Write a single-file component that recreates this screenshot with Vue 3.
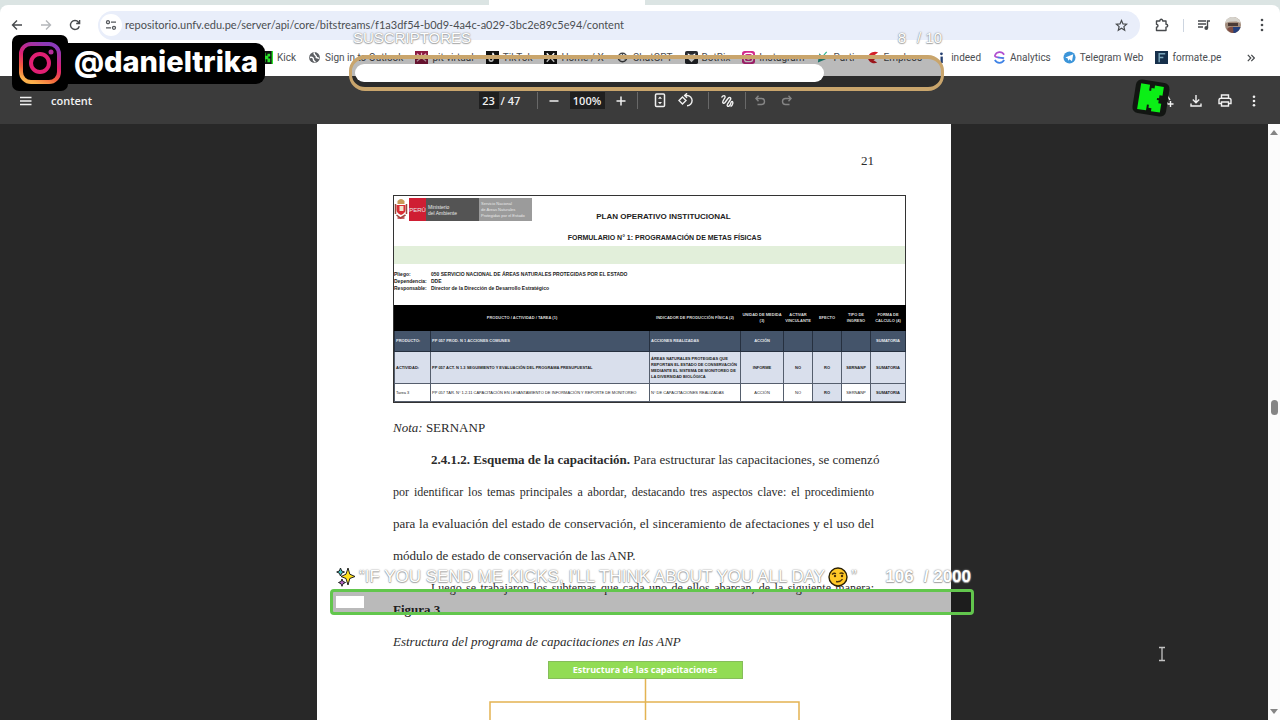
<script setup>
const bookmarks = [
  { label: 'Kick', icon: 'kick' },
  { label: 'Sign in to Outlook', icon: 'globe' },
  { label: 'pit virtual', icon: 'pit' },
  { label: 'TikTok', icon: 'tiktok' },
  { label: 'Home / X', icon: 'x' },
  { label: 'ChatGPT', icon: 'gpt' },
  { label: 'BotRix', icon: 'botrix' },
  { label: 'Instagram', icon: 'insta' },
  { label: 'Parti', icon: 'parti' },
  { label: 'Empleos', icon: 'empleos' },
  { label: 'indeed', icon: 'indeed' },
  { label: 'Analytics', icon: 'analytics' },
  { label: 'Telegram Web', icon: 'telegram' },
  { label: 'formate.pe', icon: 'formate' }
]
const subs = { now: 8, goal: 10, shown: 80 }
const kicks = { now: 106, goal: 2000, shown: 4.5 }
</script>

<template>
  <div class="screen">
    <div class="tabstrip"><div class="tab"></div></div>

    <header class="browser">
      <div class="nav">
        <button class="ib" aria-label="Atrás"><svg width="12" height="12" viewBox="0 0 12 12"><path d="M11 6H2M6 1.5 1.5 6 6 10.500" fill="none" stroke="#474a4d" stroke-width="1.400" /></svg></button>
        <button class="ib" aria-label="Adelante"><svg width="12" height="12" viewBox="0 0 12 12"><path d="M1 6h9M6 1.500 10.500 6 6 10.500" fill="none" stroke="#b4b7ba" stroke-width="1.400" /></svg></button>
        <button class="ib" aria-label="Recargar"><svg width="12" height="12" viewBox="0 0 12 12"><path d="M10.300 7.200A4.500 4.500 0 1 1 9.500 3.200L10.500 4.300M10.600 1v3.500H7.200" fill="none" stroke="#474a4d" stroke-width="1.400" /></svg></button>
      </div>
      <div class="address">
        <button class="site" aria-label="Información del sitio"><svg width="12" height="12" viewBox="0 0 12 12" fill="none" stroke="#55585c" stroke-width="1.300"><circle cx="3" cy="3.200" r="1.500" /><path d="M6 3.200h5M1 8.800h5" /><circle cx="9" cy="8.800" r="1.500" /></svg></button>
        <input class="url" aria-label="Dirección" value="repositorio.unfv.edu.pe/server/api/core/bitstreams/f1a3df54-b0d9-4a4c-a029-3bc2e89c5e94/content" />
        <button class="ib" aria-label="Favorito"><svg width="13" height="13" viewBox="0 0 13 13"><path d="m6.500 1.500 1.500 3.400 3.600.3-2.700 2.400.8 3.600-3.200-1.900-3.200 1.900.8-3.600-2.700-2.400 3.600-.3z" fill="none" stroke="#474a4d" stroke-width="1.200" /></svg></button>
      </div>
      <div class="tools">
        <button class="ib" aria-label="Extensiones"><svg width="14" height="14" viewBox="0 0 14 14"><path d="M1.500 3h3.300c0-2.300 2.900-2.300 2.900 0H11v3.300c2.300 0 2.300 2.800 0 2.800V12.500H1.500V9.300c2-.3 2-2.800 0-3z" fill="none" stroke="#474a4d" stroke-width="1.400" stroke-linejoin="round" /></svg></button>
        <span class="bar"></span>
        <button class="ib" aria-label="Multimedia"><svg width="14" height="12" viewBox="0 0 14 12"><path d="M1 2h8M1 5h8M1 8h5M10.500 9V2h2.500" fill="none" stroke="#474a4d" stroke-width="1.400" /><circle cx="9.300" cy="9" r="1.900" fill="#474a4d" /></svg></button>
        <button class="ib" aria-label="Perfil"><svg width="18" height="18" viewBox="0 0 18 18"><circle cx="9" cy="9" r="8" fill="#a28c7c" /><path d="M1.500 7C2 2 6 .8 9.500 1c4 .3 6.500 3 7 6l-4-1.500-7 .3z" fill="#d6d3cc" /><path d="M4 7h10v3H4z" fill="#4a3a35" /><path d="M3 13c3-3 8-3 11 1-2 4-8 4-11-1z" fill="#7d4c42" /><path d="M9 11h7.500c-1 3.500-4 6-7 6z" fill="#24407c" /></svg></button>
        <button class="ib" aria-label="Menú"><svg width="4" height="14" viewBox="0 0 4 14" fill="#474a4d"><circle cx="2" cy="2" r="1.300" /><circle cx="2" cy="7" r="1.300" /><circle cx="2" cy="12" r="1.300" /></svg></button>
      </div>
    </header>

    <nav class="bookmarks">
      <a v-for="b in bookmarks" :key="b.label" class="bm" href="#">
        <svg class="bi" viewBox="0 0 14 14">
          <template v-if="b.icon === 'kick'"><path d="M0 0h14v14H0z" fill="#111" /><path d="M3 2h3v3h2V3h3v3H9v2h2v4H8V9H6v3H3z" fill="#2be52b" /><path d="M12.500 0H14v14h-1.500z" fill="#2be52b" /></template>
          <template v-else-if="b.icon === 'globe'"><circle cx="7" cy="7" r="5.800" fill="#5c5f63" /><path d="M2 7c3-1 4 1 4 3l2 2M7 1.500C5 4 10 5 9 7l3 1" fill="none" stroke="#fff" stroke-width="1.500" /></template>
          <template v-else-if="b.icon === 'pit'"><path d="M0 0h14v14H0z" fill="#8b1940" /><path d="m2 3 10 8M12 3 2 11M7 2v4" stroke="#e6b9c8" stroke-width="1.300" /></template>
          <template v-else-if="b.icon === 'tiktok'"><path d="M0 0h14v14H0z" fill="#111" /><path d="M7.500 2v7a2 2 0 1 1-2-2M7.500 3q1 2.500 3.500 2.500" fill="none" stroke="#fff" stroke-width="1.600" /></template>
          <template v-else-if="b.icon === 'x'"><path d="M0 0h14v14H0z" fill="#111" /><path d="m3 2.500 8 9M11 2.500l-8 9" stroke="#fff" stroke-width="1.500" /></template>
          <template v-else-if="b.icon === 'gpt'"><circle cx="7" cy="7" r="4.500" fill="none" stroke="#3f4245" stroke-width="1.600" /><path d="m4 5 6 4M10 5 4 9M7 3v4" stroke="#3f4245" /></template>
          <template v-else-if="b.icon === 'botrix'"><rect width="14" height="14" rx="2" fill="#26282d" /><path d="M3 2.500 5.500 4h3L11 2.500V8l-4 4-4-4z" fill="#fff" /></template>
          <template v-else-if="b.icon === 'insta'"><rect width="14" height="14" rx="3" fill="#d32a8c" /><rect x="2.500" y="2.500" width="9" height="9" rx="2.500" fill="none" stroke="#fff" stroke-width="1.300" /><circle cx="7" cy="7" r="2" fill="#f7a53a" stroke="#fff" /></template>
          <template v-else-if="b.icon === 'parti'"><path d="m2 12.500 1.500-10 7 6.500z" fill="#2b9b8d" /><path d="m8 5 3.500-4M9.500 7H13" stroke="#31b58d" stroke-width="1.300" /></template>
          <template v-else-if="b.icon === 'empleos'"><path d="M12 1.500C7-1 1 3 1 7s5 8 10 5.500L7 10l4-3-5-1z" fill="#d41f27" /></template>
          <template v-else-if="b.icon === 'indeed'"><circle cx="8" cy="3" r="1.500" fill="#243e6f" /><path d="M7 6h2.500v7H7z" fill="#243e6f" /></template>
          <template v-else-if="b.icon === 'analytics'"><path d="M12 4A5.500 5.500 0 0 0 2 5c0 3 8 1 9 3.500" fill="none" stroke="#b04fd0" stroke-width="1.800" /><path d="M2 9.500A5.500 5.500 0 0 0 12 9.500M5 7l7 .5" fill="none" stroke="#3f83e6" stroke-width="1.800" /></template>
          <template v-else-if="b.icon === 'telegram'"><circle cx="7" cy="7" r="6.500" fill="#3c95d9" /><path d="m2.500 7 8.500-3.500L9.700 11 7 9l-1.500 1.500L5.200 8z" fill="#fff" /></template>
          <template v-else><path d="M0 0h14v14H0z" fill="#16304b" /><path d="M4.500 12V3H11M4.500 7H9" fill="none" stroke="#7ba6bb" stroke-width="1.500" /></template>
        </svg>
        <span>{{ b.label }}</span>
      </a>
      <button class="ib more" aria-label="Más marcadores"><svg width="8" height="8" viewBox="0 0 8 8"><path d="m.8.800 3 3.200-3 3.200M4.300.8l3 3.200-3 3.200" fill="none" stroke="#474a4d" stroke-width="1.200" /></svg></button>
    </nav>

    <section class="pdfbar">
      <div class="left">
        <button class="ib" aria-label="Índice"><svg width="12" height="10" viewBox="0 0 12 10"><path d="M0 1.500h11.500M0 5h11.500M0 8.500h11.500" stroke="#f1f1f1" stroke-width="1.500" /></svg></button>
        <span class="title">content</span>
      </div>
      <div class="mid">
        <input class="field pageno" aria-label="Página" value="23" />
        <span class="total">/ 47</span>
        <div class="grp zoomgrp">
          <button class="pb" aria-label="Alejar"><svg width="10" height="10" viewBox="0 0 10 10"><path d="M.5 5h9" stroke="#f1f1f1" stroke-width="1.500" /></svg></button>
          <input class="field zoom" aria-label="Zoom" value="100%" />
          <button class="pb" aria-label="Acercar"><svg width="10" height="10" viewBox="0 0 10 10"><path d="M.5 5h9M5 .5v9" stroke="#f1f1f1" stroke-width="1.500" /></svg></button>
        </div>
        <div class="grp fit">
          <button class="pb" aria-label="Ajustar"><svg width="12" height="15" viewBox="0 0 12 15"><rect x="1.500" y="1" width="9" height="12.500" rx="1" fill="none" stroke="#f1f1f1" stroke-width="1.500" /><path d="M4 5.700h4L6 3.500zM4 9h4l-2 2.200z" fill="#f1f1f1" /></svg></button>
          <button class="pb" aria-label="Girar"><svg width="15" height="15" viewBox="0 0 15 15"><path d="m4.500 4 3.500 3.500L4.500 11 1 7.500zM6.500 2.500H9a5 5 0 0 1 0 10.200M9 .3 6.600 2.500 9 4.800" fill="none" stroke="#f1f1f1" stroke-width="1.400" /></svg></button>
        </div>
        <div class="grp draw">
          <button class="pb" aria-label="Dibujar"><svg width="14" height="14" viewBox="0 0 14 14"><path d="M1.500 3.500C3 1 5.500 1 5 3.500L3 7c-1 2 .8 3 2 1.500l3-4c1.500-2 3.500-.5 2.500 1L7.500 10c-1 2 .5 3.300 2 1.500 2-2 1-4 2.500-4s1 4-1.500 5" fill="none" stroke="#f1f1f1" stroke-width="1.400" /></svg></button>
        </div>
        <div class="grp hist">
          <button class="pb" aria-label="Deshacer"><svg width="11" height="11" viewBox="0 0 11 11"><path d="M3.500.8.9 3.500l2.600 2.700M1 3.500h5.500a3 3 0 0 1 0 6H2.500" fill="none" stroke="#858585" stroke-width="1.400" /></svg></button>
          <button class="pb" aria-label="Rehacer"><svg width="11" height="11" viewBox="0 0 11 11"><path d="m7.500.8 2.600 2.700-2.600 2.700M10 3.500H4.500a3 3 0 0 0 0 6h4" fill="none" stroke="#858585" stroke-width="1.400" /></svg></button>
        </div>
      </div>
      <div class="right">
        <button class="ib" aria-label="Resaltar"><svg width="14" height="14" viewBox="0 0 14 14"><path d="M7 1 3 9h5M7 1l3 5M10.500 7v6M7.500 10h6M1 12.500h5" fill="none" stroke="#f1f1f1" stroke-width="1.400" /></svg></button>
        <button class="ib" aria-label="Descargar"><svg width="12" height="12" viewBox="0 0 12 12"><path d="M6 0v7.500M2.800 4.500 6 7.700l3.200-3.200M1 8.500V11h10V8.500" fill="none" stroke="#f1f1f1" stroke-width="1.400" /></svg></button>
        <button class="ib" aria-label="Imprimir"><svg width="14" height="13" viewBox="0 0 14 13"><path d="M3.500 4V1h7v3M3.500 9.500H1V6q0-1.800 2-1.800h8q2 0 2 1.800v3.500h-2.500M3.500 8h7v4h-7z" fill="none" stroke="#f1f1f1" stroke-width="1.400" /></svg></button>
        <button class="ib" aria-label="Más acciones"><svg width="4" height="12" viewBox="0 0 4 12" fill="#f1f1f1"><circle cx="2" cy="1.700" r="1.300" /><circle cx="2" cy="6" r="1.300" /><circle cx="2" cy="10.300" r="1.300" /></svg></button>
      </div>
    </section>

    <main class="viewer">
      <div class="canvas">
        <article class="page">
          <div class="folio">21</div>
          <figure class="form">
            <div class="logos">
              <svg class="crest" viewBox="0 0 13 22"><path d="M3 3q3.500-4 7 0v3H3z" fill="#c99a57" /><path d="M2 7h9v5q0 3-4.500 5Q2 15 2 12z" fill="#d92f35" /><path d="M5 8h4v5H5z" fill="#efe5cf" /><path d="M1 6v10M12 6v10M2 17l4 3 5-3" fill="none" stroke="#9b4b3d" stroke-width="1.500" /><path d="M3 20h7" stroke="#b63438" stroke-width="1.500" /></svg>
              <span class="peru">PERÚ</span>
              <span class="min">Ministerio<br />del Ambiente</span>
              <span class="serv">Servicio Nacional<br />de Áreas Naturales<br />Protegidas por el Estado</span>
            </div>
            <h2>PLAN OPERATIVO INSTITUCIONAL</h2>
            <h3>FORMULARIO N° 1: PROGRAMACIÓN DE METAS FÍSICAS</h3>
            <div class="band"></div>
            <dl class="meta">
              <dt>Pliego:</dt><dd>050 SERVICIO NACIONAL DE ÁREAS NATURALES PROTEGIDAS POR EL ESTADO</dd>
              <dt>Dependencia:</dt><dd>DDE</dd>
              <dt>Responsable:</dt><dd>Director de la Dirección de Desarrollo Estratégico</dd>
            </dl>
            <table>
              <colgroup><col class="c1" /><col class="c2" /><col class="c3" /><col class="c4" /><col class="c5" /><col class="c5" /><col class="c5" /><col class="c6" /></colgroup>
              <thead>
                <tr><th colspan="2">PRODUCTO / ACTIVIDAD / TAREA (1)</th><th>INDICADOR DE PRODUCCIÓN FÍSICA (2)</th><th>UNIDAD DE MEDIDA<br />(3)</th><th>ACTIVAR<br />VINCULANTE</th><th>EFECTO</th><th>TIPO DE<br />INGRESO</th><th>FORMA DE<br />CALCULO (4)</th></tr>
              </thead>
              <tbody>
                <tr class="prod"><td>PRODUCTO:</td><td>PP 057 PROD. N 1 ACCIONES COMUNES</td><td>ACCIONES REALIZADAS</td><td>ACCIÓN</td><td></td><td></td><td></td><td>SUMATORIA</td></tr>
                <tr class="act"><td>ACTIVIDAD:</td><td>PP 057 ACT. N 1.3 SEGUIMIENTO Y EVALUACIÓN DEL PROGRAMA PRESUPUESTAL</td><td>ÁREAS NATURALES PROTEGIDAS QUE<br />REPORTAN EL ESTADO DE CONSERVACIÓN<br />MEDIANTE EL SISTEMA DE MONITOREO DE<br />LA DIVERSIDAD BIOLÓGICA</td><td>INFORME</td><td>NO</td><td>RO</td><td>SERNANP</td><td>SUMATORIA</td></tr>
                <tr class="task"><td>Tarea 3</td><td>PP 057 TAR. N° 1.2.11 CAPACITACIÓN EN LEVANTAMIENTO DE INFORMACIÓN Y REPORTE DE MONITOREO</td><td>N° DE CAPACITACIONES REALIZADAS</td><td>ACCIÓN</td><td>NO</td><td class="hl">RO</td><td>SERNANP</td><td class="hl">SUMATORIA</td></tr>
              </tbody>
            </table>
          </figure>
          <p class="plain"><em>Nota:</em> SERNANP</p>
          <p class="body">
            <span class="line first"><b>2.4.1.2. Esquema de la capacitación.</b> Para estructurar las capacitaciones, se comenzó</span>
            <span class="line small">por identificar los temas principales a abordar, destacando tres aspectos clave: el procedimiento</span>
            <span class="line">para la evaluación del estado de conservación, el sinceramiento de afectaciones y el uso del</span>
            <span class="line last">módulo de estado de conservación de las ANP.</span>
          </p>
          <p class="body"><span class="line first small">Luego se trabajaron los subtemas que cada uno de ellos abarcan, de la siguiente manera:</span></p>
          <p class="fig"><b>Figura 3</b></p>
          <p class="plain"><em>Estructura del programa de capacitaciones en las ANP</em></p>
          <div class="chart">
            <div class="node">Estructura de las capacitaciones</div>
            <svg width="312" height="60" viewBox="0 0 312 60"><path d="M156.500 0v60M1 60V23h309v37" fill="none" stroke="#e3b352" stroke-width="1.500" /></svg>
          </div>
        </article>
      </div>
      <div class="scroll">
        <svg width="8" height="5" viewBox="0 0 8 5"><path d="M0 5h8L4 0z" fill="#858585" /></svg>
        <span class="thumb"></span>
        <svg width="8" height="5" viewBox="0 0 8 5"><path d="M0 0h8L4 5z" fill="#858585" /></svg>
      </div>
    </main>

    <div class="handle">
      <div class="igbox">
        <svg width="42" height="42" viewBox="0 0 42 42">
          <defs><linearGradient id="ig" x1=".7" y1="0" x2=".3" y2="1"><stop offset="0" stop-color="#8a3ab9" /><stop offset=".45" stop-color="#e01f73" /><stop offset=".75" stop-color="#f2603c" /><stop offset="1" stop-color="#fbb04b" /></linearGradient></defs>
          <rect x="2" y="2" width="38" height="38" rx="10" fill="none" stroke="url(#ig)" stroke-width="4" />
          <circle cx="21" cy="21" r="9" fill="none" stroke="#e01f73" stroke-width="4" /><circle cx="32" cy="10" r="2.500" fill="#b62c9c" />
        </svg>
      </div>
      <span class="name">@danieltrika</span>
    </div>

    <div class="goal subs">
      <div class="row"><span>SUSCRIPTORES</span><span class="count"><span>{{ subs.now }}</span><span>/ {{ subs.goal }}</span></span></div>
      <div class="track" role="progressbar" aria-label="Suscriptores" :aria-valuenow="subs.now" :aria-valuemax="subs.goal"><div class="fill" :style="{ width: subs.shown + '%' }"></div></div>
    </div>

    <div class="goal kicks">
      <div class="row">
        <span class="msg">
          <svg width="20" height="20" viewBox="0 0 20 20" stroke="#222" stroke-width="1"><path d="m12 1 1.800 6.200L19 9.500l-5.200 2L12 18l-2-6.500-5-2 5-2.300z" fill="#ffe21f" /><path d="m4.500 1 1.200 3L8.500 5 5.700 6.200 4.500 9 3.300 6.200.7 5l2.600-1z" fill="#43c5c8" /><path d="m6 12 1 2.500 2.500 1L7 16.700 6 19.300l-1-2.600-2.500-1.200L5 14.500z" fill="#b765c9" /></svg>
          <span>“IF YOU SEND ME KICKS, I'LL THINK ABOUT YOU ALL DAY</span>
          <svg width="20" height="20" viewBox="0 0 20 20"><circle cx="10" cy="10" r="9" fill="#ffc928" stroke="#2a2005" stroke-width="1.400" /><path d="M4 7.500q2-2 4-.8M11.500 6.500q2.500-1.300 4 .7M8 14.500q4 1 6.500-2.300" fill="none" stroke="#4a3108" stroke-width="1.300" /><circle cx="7" cy="9" r="1.200" fill="#4a3108" /><circle cx="14" cy="9" r="1.200" fill="#4a3108" /></svg>
          <span>”</span>
        </span>
        <span class="count"><span>{{ kicks.now }}</span><span>/ {{ kicks.goal }}</span></span>
      </div>
      <div class="track" role="progressbar" aria-label="Kicks" :aria-valuenow="kicks.now" :aria-valuemax="kicks.goal"><div class="fill" :style="{ width: kicks.shown + '%' }"></div></div>
    </div>

    <svg class="kbadge" width="40" height="40" viewBox="0 0 40 40"><g transform="rotate(9 20 20)"><rect x="3" y="3" width="34" height="34" rx="6" fill="#121512" /><path d="M8 7h9v6h2v-3h3V7h9v9h-3v3h-2v2h2v3h3v9h-9v-3h-3v-3h-2v6H8z" fill="#0bef16" /></g></svg>
    <svg class="cursor" width="8" height="16" viewBox="0 0 8 16"><path d="M1 1.500h6M1 14.500h6M4 1.500v13" stroke="#c4c4c4" stroke-width="1.300" /></svg>
  </div>
</template>

<style>
body { background: #282828; }
</style>

<style scoped>
.screen { position: relative; display: flex; flex-direction: column; height: 100vh; overflow: hidden; background: #dbe4e3; font-family: "Open Sans", "Noto Sans", sans-serif; }
.screen * { box-sizing: border-box; }
button { padding: 0; border: 0; background: none; display: flex; align-items: center; justify-content: center; }
input { border: 0; padding: 0; min-width: 0; font-family: inherit; }
svg { flex: none; display: block; }
.ib { width: 20px; height: 20px; }
.tabstrip { height: 5px; flex: none; display: flex; justify-content: center; }
.tab { width: 156px; margin-right: 146px; background: #fff; }
.browser { flex: none; height: 40px; background: #fff; border-radius: 8px 8px 0 0; display: flex; align-items: center; padding: 0 8px 0 7px; gap: 12px; }
.nav { display: flex; gap: 9px; margin-right: 1px; }
.address { flex: 1; height: 29px; border-radius: 15px; background: #e9eefa; display: flex; align-items: center; padding: 0 9px 0 2px; }
.site { width: 22px; height: 22px; border-radius: 50%; background: #fff; }
.url { flex: 1; margin-left: 3px; background: none; font-size: 11px; line-height: 20px; color: #4b4e52; font-family: Lato, sans-serif; }
.tools { display: flex; align-items: center; gap: 9px; }
.bar { width: 1px; height: 13px; margin: 0 1px 0 2px; background: #cdd5e0; }
.bookmarks { flex: none; height: 31px; background: #fff; display: flex; align-items: center; padding: 0 19px 6px 260px; gap: 12px; }
.bm { display: flex; align-items: center; gap: 4px; font: 10px/16px Roboto, sans-serif; color: #4b4e52; text-decoration: none; white-space: nowrap; }
.bi { width: 13px; height: 13px; }
.more { margin-left: auto; }
.pdfbar { flex: none; height: 48px; background: #3b3b3b; display: grid; grid-template-columns: 1fr auto 1fr; align-items: center; color: #f1f1f1; font-size: 11px; font-weight: 600; padding: 1px 16px 0; }
.left { display: flex; align-items: center; gap: 15px; }
.mid { display: flex; align-items: center; gap: 2px; margin-right: 2px; }
.field { height: 17px; background: #1f1f1f; color: #f1f1f1; text-align: center; font-size: 11px; font-weight: 600; }
.pageno { width: 20px; }
.zoom { width: 35px; }
.total { width: 20px; margin-right: 14px; white-space: nowrap; }
.grp { display: flex; align-items: center; height: 17px; }
.pb { width: 26px; height: 17px; }
.zoomgrp, .draw { border: solid #686868; border-width: 0 1px; }
.zoomgrp { padding: 0 3px; gap: 3px; }
.fit { margin: 0 7px; }
.draw { padding: 0 5px; }
.right { display: flex; justify-content: flex-end; gap: 9px; }
.viewer { flex: 1; min-height: 0; display: flex; background: #282828; }
.canvas { flex: 1; overflow: hidden; }
.scroll { width: 12px; background: #fcfcfc; display: flex; flex-direction: column; align-items: center; padding: 6px 0; }
.thumb { width: 7px; height: 15px; border-radius: 4px; background: #858585; margin: 265px 0 auto; }
.page { width: 634px; margin: 0 auto; min-height: 100%; background: #fff; padding: 27px 77px 0 76px; color: #2b2b2b; font: 13px/20px "Liberation Serif", serif; }
.folio { text-align: right; }
.form { width: 513px; margin: 24px 0 9px; border: 1px solid #333; background: #fff; font-family: "Liberation Sans", sans-serif; color: #222; }
.logos { display: flex; height: 26px; padding: 2px 0 1px; font-size: 5px; line-height: 6px; color: #e8e8e8; }
.logos span { display: flex; align-items: center; height: 23px; white-space: nowrap; }
.crest { width: 14px; height: 22px; margin-right: 1px; }
.logos .peru { width: 17px; background: #cf1e33; justify-content: center; font-size: 6px; }
.logos .min { width: 53px; background: #545454; padding-left: 2px; }
.logos .serv { width: 53px; background: #9b9b9b; padding-left: 2px; font-size: 4px; }
h2, h3 { margin: 0; text-align: center; white-space: nowrap; }
h2 { font-size: 8px; line-height: 10px; margin-top: -10px; padding-left: 28px; }
h3 { font-size: 7px; line-height: 10px; margin: 11px 0 3px; padding-left: 30px; }
.band { height: 18px; background: #e2efda; }
.meta { margin: 7px 0 13px; display: grid; grid-template-columns: 37px 1fr; font-size: 5px; line-height: 7px; font-weight: 700; }
.meta dd { margin: 0; }
table { width: 100%; border-collapse: collapse; table-layout: fixed; font-size: 4px; line-height: 6px; }
.c1 { width: 36px; } .c2 { width: 219px; } .c3 { width: 91px; } .c4 { width: 43px; } .c5 { width: 29px; } .c6 { width: 35px; }
th { height: 25px; padding: 0; border: 1px solid #000; background: #000; color: #ddd; }
td { padding: 0 0 0 1px; border: 1px solid #555e6d; font-weight: 700; white-space: nowrap; }
td:nth-child(n + 4) { text-align: center; padding: 0; }
.prod td { height: 21px; background: #44546a; color: #e6e9ee; border-color: #26303f; }
.act td { height: 32px; background: #d9dfec; }
.task td { height: 18px; font-weight: 400; }
.task .hl { background: #d9dfec; font-weight: 700; }
p { margin: 0; line-height: 32px; }
.line { display: block; white-space: nowrap; text-align-last: justify; }
.first { padding-left: 38px; }
.last { text-align-last: left; }
.small { font-size: 12px; }
.fig { margin-top: -10px; }
.chart { display: flex; flex-direction: column; align-items: center; width: 312px; margin: 3px 0 0 96px; }
.node { width: 195px; height: 18px; background: #92dc55; border: 1px solid #86bd5b; color: #fff; text-align: center; font: 700 9px/16px "Open Sans", sans-serif; white-space: nowrap; }
.handle { position: absolute; left: 12px; top: 35px; display: flex; align-items: center; }
.igbox { width: 56px; height: 56px; border-radius: 7px; background: #000; display: flex; align-items: center; justify-content: center; z-index: 1; }
.name { height: 41px; margin-left: -6px; padding: 0 7px 0 12px; border-radius: 0 9px 9px 0; background: #000; color: #fff; font: 800 29px/38px Inter, sans-serif; }
.goal { position: absolute; color: #fff; font-family: "Liberation Sans", sans-serif; text-shadow: 0 0 1px #888, 0 1px 1px #aaa, 0 0 2px #aaa; white-space: nowrap; }
.row, .msg, .count { display: flex; align-items: center; }
.row { justify-content: space-between; }
.track { background: rgba(0, 0, 0, .27); }
.fill { background: #fff; height: 100%; }
.subs { left: 349px; top: 25px; width: 595px; font-size: 15px; line-height: 26px; }
.subs .row { height: 30px; padding: 0 2px 4px 4px; }
.subs .count { gap: 11px; }
.subs .track { height: 36px; border: solid #c9a56c; border-width: 4px 3px 4px 3px; border-radius: 16px; padding: 5px 0 5px 3px; }
.subs .fill { border-radius: 9px; }
.kicks { left: 330px; top: 564px; width: 644px; font-size: 17px; line-height: 24px; }
.kicks .row { height: 25px; padding: 0 3px 0 6px; }
.kicks .msg { gap: 3px; }
.kicks .count { gap: 10px; font-weight: 700; }
.kicks .track { height: 26px; border: 3px solid #62c64d; border-radius: 4px; padding: 4px 3px; }
.kbadge { position: absolute; left: 1131px; top: 78px; }
.cursor { position: absolute; left: 1158px; top: 646px; }
</style>
